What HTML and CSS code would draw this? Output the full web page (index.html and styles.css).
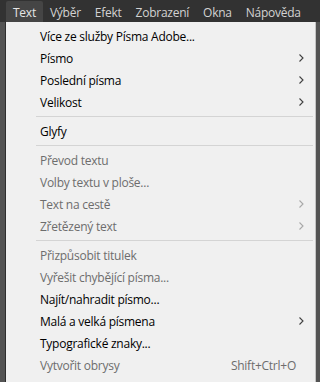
FILE: index.html
```html
<!DOCTYPE html>
<html lang="cs">
<head>
<meta charset="utf-8">
<link rel="stylesheet" href="styles.css">
</head>
<body>
<div class="menubar">
  <span class="mb-item active">Text</span>
  <span class="mb-item">Výběr</span>
  <span class="mb-item">Efekt</span>
  <span class="mb-item">Zobrazení</span>
  <span class="mb-item">Okna</span>
  <span class="mb-item">Nápověda</span>
</div>
<div class="stage">
  <div class="menu">
    <div class="row"><span class="label">Více ze služby Písma Adobe...</span></div>
    <div class="row"><span class="label">Písmo</span><svg class="chev" width="5" height="8" viewBox="0 0 5 8"><polyline points="0.5,0.5 4,4 0.5,7.5"/></svg></div>
    <div class="row"><span class="label">Poslední písma</span><svg class="chev" width="5" height="8" viewBox="0 0 5 8"><polyline points="0.5,0.5 4,4 0.5,7.5"/></svg></div>
    <div class="row"><span class="label">Velikost</span><svg class="chev" width="5" height="8" viewBox="0 0 5 8"><polyline points="0.5,0.5 4,4 0.5,7.5"/></svg></div>
    <div class="sep"></div>
    <div class="row"><span class="label">Glyfy</span></div>
    <div class="sep"></div>
    <div class="row off"><span class="label">Převod textu</span></div>
    <div class="row off"><span class="label">Volby textu v ploše...</span></div>
    <div class="row off"><span class="label">Text na cestě</span><svg class="chev" width="5" height="8" viewBox="0 0 5 8"><polyline points="0.5,0.5 4,4 0.5,7.5"/></svg></div>
    <div class="row off"><span class="label">Zřetězený text</span><svg class="chev" width="5" height="8" viewBox="0 0 5 8"><polyline points="0.5,0.5 4,4 0.5,7.5"/></svg></div>
    <div class="sep"></div>
    <div class="row off"><span class="label">Přizpůsobit titulek</span></div>
    <div class="row off"><span class="label">Vyřešit chybějící písma...</span></div>
    <div class="row"><span class="label">Najít/nahradit písmo...</span></div>
    <div class="row"><span class="label">Malá a velká písmena</span><svg class="chev" width="5" height="8" viewBox="0 0 5 8"><polyline points="0.5,0.5 4,4 0.5,7.5"/></svg></div>
    <div class="row"><span class="label">Typografické znaky...</span></div>
    <div class="row off"><span class="label">Vytvořit obrysy</span><span class="shortcut">Shift+Ctrl+O</span></div>
  </div>
</div>
</body>
</html>
```
FILE: styles.css
```css
html, body {
  margin: 0;
  padding: 0;
}
body {
  width: 320px;
  height: 382px;
  overflow: hidden;
  background: #535353;
  font-family: "Open Sans", "Noto Sans", sans-serif;
  font-size: 12px;
}
.menubar {
  height: 22px;
  background: #323232;
  display: flex;
  align-items: stretch;
  padding-left: 6px;
}
.mb-item {
  display: flex;
  align-items: center;
  padding: 1px 7px 0;
  margin-top: 1px;
  color: #d2d2d2;
  font-size: 12px;
  letter-spacing: -0.25px;
}
.mb-item.active {
  background: #454545;
  color: #e6e6e6;
  border-radius: 2px 2px 0 0;
}
.stage {
  display: flex;
  padding-left: 5px;
}
.menu {
  width: 311px;
  background: #f0f0f0;
  border-left: 1px solid #2e2e2e;
  border-right: 1px solid #c4c4c4;
  padding: 3px 0 8px;
  height: 360px;
  box-sizing: border-box;
}
.row {
  height: 22px;
  display: flex;
  align-items: center;
  padding-left: 34px;
  padding-right: 11px;
  color: #000;
  letter-spacing: -0.25px;
}
.row .label {
  flex: 1;
}
.row.off {
  color: #6d6d6d;
}
.chev {
  fill: none;
  stroke: #404040;
  stroke-width: 1.1;
}
.row.off .chev {
  stroke: #a8a8a8;
}
.shortcut {
  margin-right: 8px;
}
.sep {
  height: 7px;
  margin: 0 2px 0 30px;
  display: flex;
  align-items: center;
}
.sep::before {
  content: "";
  display: block;
  width: 100%;
  height: 1px;
  background: #d4d4d4;
}
```
